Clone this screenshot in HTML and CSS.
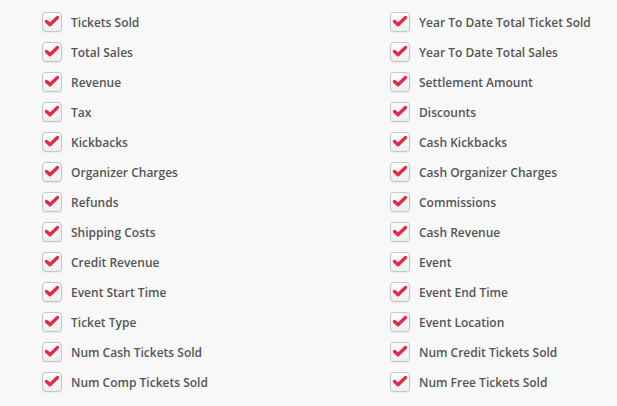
FILE: index.html
```html
<!DOCTYPE html>
<html>
<head>
<meta charset="utf-8">
<link rel="stylesheet" href="styles.css">
</head>
<body>
<div class="grid">
  <div class="col">
    <label class="item"><span class="box"><svg viewBox="0 0 18 18"><path d="M3.5 8.5 L7 11.8 L14.5 4.5"/></svg></span><span class="txt">Tickets Sold</span></label>
    <label class="item"><span class="box"><svg viewBox="0 0 18 18"><path d="M3.5 8.5 L7 11.8 L14.5 4.5"/></svg></span><span class="txt">Total Sales</span></label>
    <label class="item"><span class="box"><svg viewBox="0 0 18 18"><path d="M3.5 8.5 L7 11.8 L14.5 4.5"/></svg></span><span class="txt">Revenue</span></label>
    <label class="item"><span class="box"><svg viewBox="0 0 18 18"><path d="M3.5 8.5 L7 11.8 L14.5 4.5"/></svg></span><span class="txt">Tax</span></label>
    <label class="item"><span class="box"><svg viewBox="0 0 18 18"><path d="M3.5 8.5 L7 11.8 L14.5 4.5"/></svg></span><span class="txt">Kickbacks</span></label>
    <label class="item"><span class="box"><svg viewBox="0 0 18 18"><path d="M3.5 8.5 L7 11.8 L14.5 4.5"/></svg></span><span class="txt">Organizer Charges</span></label>
    <label class="item"><span class="box"><svg viewBox="0 0 18 18"><path d="M3.5 8.5 L7 11.8 L14.5 4.5"/></svg></span><span class="txt">Refunds</span></label>
    <label class="item"><span class="box"><svg viewBox="0 0 18 18"><path d="M3.5 8.5 L7 11.8 L14.5 4.5"/></svg></span><span class="txt">Shipping Costs</span></label>
    <label class="item"><span class="box"><svg viewBox="0 0 18 18"><path d="M3.5 8.5 L7 11.8 L14.5 4.5"/></svg></span><span class="txt">Credit Revenue</span></label>
    <label class="item"><span class="box"><svg viewBox="0 0 18 18"><path d="M3.5 8.5 L7 11.8 L14.5 4.5"/></svg></span><span class="txt">Event Start Time</span></label>
    <label class="item"><span class="box"><svg viewBox="0 0 18 18"><path d="M3.5 8.5 L7 11.8 L14.5 4.5"/></svg></span><span class="txt">Ticket Type</span></label>
    <label class="item"><span class="box"><svg viewBox="0 0 18 18"><path d="M3.5 8.5 L7 11.8 L14.5 4.5"/></svg></span><span class="txt">Num Cash Tickets Sold</span></label>
    <label class="item"><span class="box"><svg viewBox="0 0 18 18"><path d="M3.5 8.5 L7 11.8 L14.5 4.5"/></svg></span><span class="txt">Num Comp Tickets Sold</span></label>
  </div>
  <div class="col">
    <label class="item"><span class="box"><svg viewBox="0 0 18 18"><path d="M3.5 8.5 L7 11.8 L14.5 4.5"/></svg></span><span class="txt">Year To Date Total Ticket Sold</span></label>
    <label class="item"><span class="box"><svg viewBox="0 0 18 18"><path d="M3.5 8.5 L7 11.8 L14.5 4.5"/></svg></span><span class="txt">Year To Date Total Sales</span></label>
    <label class="item"><span class="box"><svg viewBox="0 0 18 18"><path d="M3.5 8.5 L7 11.8 L14.5 4.5"/></svg></span><span class="txt">Settlement Amount</span></label>
    <label class="item"><span class="box"><svg viewBox="0 0 18 18"><path d="M3.5 8.5 L7 11.8 L14.5 4.5"/></svg></span><span class="txt">Discounts</span></label>
    <label class="item"><span class="box"><svg viewBox="0 0 18 18"><path d="M3.5 8.5 L7 11.8 L14.5 4.5"/></svg></span><span class="txt">Cash Kickbacks</span></label>
    <label class="item"><span class="box"><svg viewBox="0 0 18 18"><path d="M3.5 8.5 L7 11.8 L14.5 4.5"/></svg></span><span class="txt">Cash Organizer Charges</span></label>
    <label class="item"><span class="box"><svg viewBox="0 0 18 18"><path d="M3.5 8.5 L7 11.8 L14.5 4.5"/></svg></span><span class="txt">Commissions</span></label>
    <label class="item"><span class="box"><svg viewBox="0 0 18 18"><path d="M3.5 8.5 L7 11.8 L14.5 4.5"/></svg></span><span class="txt">Cash Revenue</span></label>
    <label class="item"><span class="box"><svg viewBox="0 0 18 18"><path d="M3.5 8.5 L7 11.8 L14.5 4.5"/></svg></span><span class="txt">Event</span></label>
    <label class="item"><span class="box"><svg viewBox="0 0 18 18"><path d="M3.5 8.5 L7 11.8 L14.5 4.5"/></svg></span><span class="txt">Event End Time</span></label>
    <label class="item"><span class="box"><svg viewBox="0 0 18 18"><path d="M3.5 8.5 L7 11.8 L14.5 4.5"/></svg></span><span class="txt">Event Location</span></label>
    <label class="item"><span class="box"><svg viewBox="0 0 18 18"><path d="M3.5 8.5 L7 11.8 L14.5 4.5"/></svg></span><span class="txt">Num Credit Tickets Sold</span></label>
    <label class="item"><span class="box"><svg viewBox="0 0 18 18"><path d="M3.5 8.5 L7 11.8 L14.5 4.5"/></svg></span><span class="txt">Num Free Tickets Sold</span></label>
  </div>
</div>
</body>
</html>
```
FILE: styles.css
```css
html, body {
  margin: 0;
  padding: 0;
  background: #f8f8f8;
}
body {
  font-family: "Open Sans", "Liberation Sans", sans-serif;
  font-weight: 600;
  font-size: 12px;
  color: #555;
}
.grid {
  display: grid;
  grid-template-columns: 348px 1fr;
  padding: 7px 0 0 42px;
}
.col {
  display: flex;
  flex-direction: column;
}
.item {
  display: flex;
  align-items: center;
  height: 30px;
}
.box {
  box-sizing: border-box;
  width: 20px;
  height: 20px;
  border: 1px solid #c4c4c4;
  border-radius: 4px;
  background: linear-gradient(#ffffff, #eeeeee);
  box-shadow: 0 1px 1px rgba(0,0,0,0.06);
  display: flex;
  align-items: center;
  justify-content: center;
  flex: none;
}
.box svg {
  width: 18px;
  height: 18px;
}
.box path {
  fill: none;
  stroke: #e42a4a;
  stroke-width: 3.4;
  stroke-linecap: round;
  stroke-linejoin: round;
}
.txt {
  margin-left: 9px;
}
```
